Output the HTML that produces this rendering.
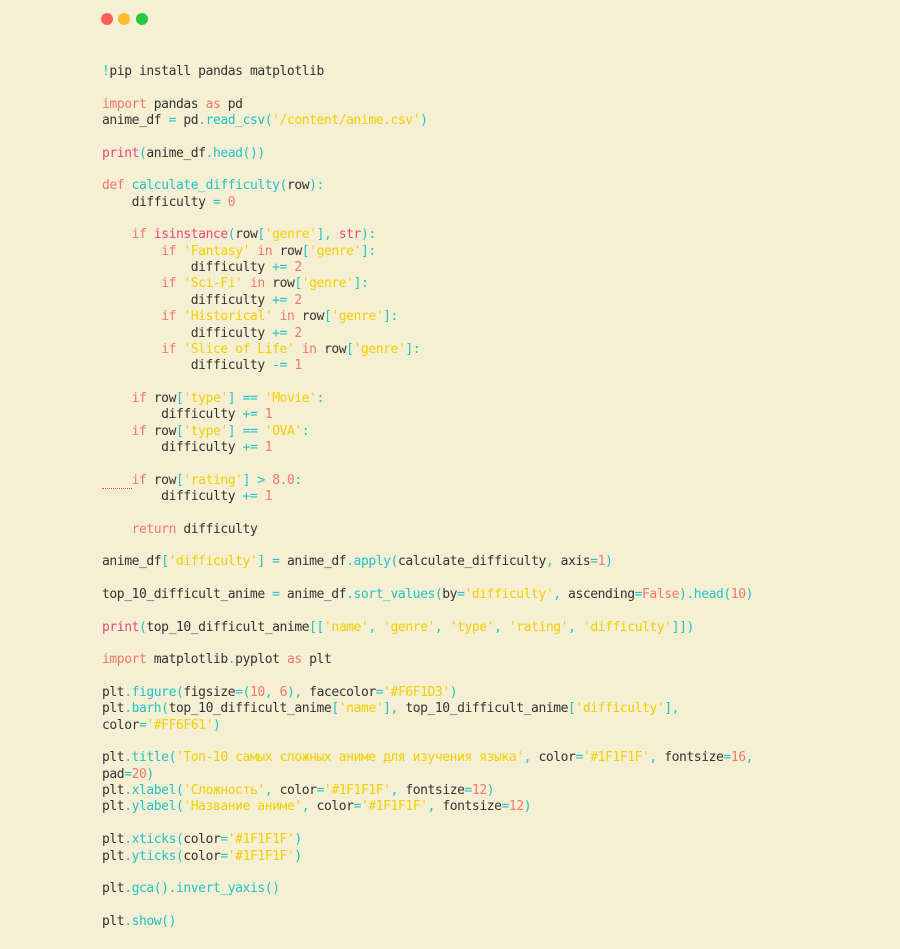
<!DOCTYPE html>
<html><head><meta charset="utf-8"><style>
html,body{margin:0;padding:0;background:#f5efd3;width:900px;height:949px;overflow:hidden}
.dots{position:absolute;top:13px;left:101px}
.dots span{position:absolute;width:12px;height:12px;border-radius:50%;top:0}
pre{position:absolute;left:102px;top:64px;margin:0;font-family:"DejaVu Sans Mono","Liberation Mono",monospace;font-size:13px;letter-spacing:-0.43px;line-height:16.35px;color:#333;white-space:pre}
.k{color:#f4776c}.b{color:#e6487f}.c{color:#22c3c6}.s{color:#f2d000}.n{color:#f4776c}
.u{border-bottom:1px dotted #e84a4a}
</style></head><body>
<div class="dots"><span style="left:0;background:#ff5f57"></span><span style="left:17px;background:#febc2e"></span><span style="left:35px;background:#28c840"></span></div>
<pre><span class="c">!</span>pip install pandas matplotlib

<span class="k">import</span> pandas <span class="k">as</span> pd
anime_df <span class="c">=</span> pd<span class="c">.read_csv(</span><span class="s">'/content/anime.csv'</span><span class="c">)</span>

<span class="b">print</span><span class="c">(</span>anime_df<span class="c">.head())</span>

<span class="k">def</span> <span class="c">calculate_difficulty(</span>row<span class="c">):</span>
    difficulty <span class="c">=</span> <span class="n">0</span>

    <span class="k">if</span> <span class="b">isinstance</span><span class="c">(</span>row<span class="c">[</span><span class="s">'genre'</span><span class="c">],</span> <span class="b">str</span><span class="c">):</span>
        <span class="k">if</span> <span class="s">'Fantasy'</span> <span class="k">in</span> row<span class="c">[</span><span class="s">'genre'</span><span class="c">]:</span>
            difficulty <span class="c">+=</span> <span class="n">2</span>
        <span class="k">if</span> <span class="s">'Sci-Fi'</span> <span class="k">in</span> row<span class="c">[</span><span class="s">'genre'</span><span class="c">]:</span>
            difficulty <span class="c">+=</span> <span class="n">2</span>
        <span class="k">if</span> <span class="s">'Historical'</span> <span class="k">in</span> row<span class="c">[</span><span class="s">'genre'</span><span class="c">]:</span>
            difficulty <span class="c">+=</span> <span class="n">2</span>
        <span class="k">if</span> <span class="s">'Slice of Life'</span> <span class="k">in</span> row<span class="c">[</span><span class="s">'genre'</span><span class="c">]:</span>
            difficulty <span class="c">-=</span> <span class="n">1</span>

    <span class="k">if</span> row<span class="c">[</span><span class="s">'type'</span><span class="c">]</span> <span class="c">==</span> <span class="s">'Movie'</span><span class="c">:</span>
        difficulty <span class="c">+=</span> <span class="n">1</span>
    <span class="k">if</span> row<span class="c">[</span><span class="s">'type'</span><span class="c">]</span> <span class="c">==</span> <span class="s">'OVA'</span><span class="c">:</span>
        difficulty <span class="c">+=</span> <span class="n">1</span>

<span class="u">    </span><span class="k">if</span> row<span class="c">[</span><span class="s">'rating'</span><span class="c">]</span> <span class="c">&gt;</span> <span class="n">8.0</span><span class="c">:</span>
        difficulty <span class="c">+=</span> <span class="n">1</span>

    <span class="k">return</span> difficulty

anime_df<span class="c">[</span><span class="s">'difficulty'</span><span class="c">]</span> <span class="c">=</span> anime_df<span class="c">.apply(</span>calculate_difficulty<span class="c">,</span> axis<span class="c">=</span><span class="n">1</span><span class="c">)</span>

top_10_difficult_anime <span class="c">=</span> anime_df<span class="c">.sort_values(</span>by<span class="c">=</span><span class="s">'difficulty'</span><span class="c">,</span> ascending<span class="c">=</span><span class="n">False</span><span class="c">).head(</span><span class="n">10</span><span class="c">)</span>

<span class="b">print</span><span class="c">(</span>top_10_difficult_anime<span class="c">[[</span><span class="s">'name'</span><span class="c">,</span> <span class="s">'genre'</span><span class="c">,</span> <span class="s">'type'</span><span class="c">,</span> <span class="s">'rating'</span><span class="c">,</span> <span class="s">'difficulty'</span><span class="c">]])</span>

<span class="k">import</span> matplotlib<span class="c">.</span>pyplot <span class="k">as</span> plt

plt<span class="c">.figure(</span>figsize<span class="c">=(</span><span class="n">10</span><span class="c">,</span> <span class="n">6</span><span class="c">),</span> facecolor<span class="c">=</span><span class="s">'#F6F1D3'</span><span class="c">)</span>
plt<span class="c">.barh(</span>top_10_difficult_anime<span class="c">[</span><span class="s">'name'</span><span class="c">],</span> top_10_difficult_anime<span class="c">[</span><span class="s">'difficulty'</span><span class="c">],</span>
color<span class="c">=</span><span class="s">'#FF6F61'</span><span class="c">)</span>

plt<span class="c">.title(</span><span class="s">'Топ-10 самых сложных аниме для изучения языка'</span><span class="c">,</span> color<span class="c">=</span><span class="s">'#1F1F1F'</span><span class="c">,</span> fontsize<span class="c">=</span><span class="n">16</span><span class="c">,</span>
pad<span class="c">=</span><span class="n">20</span><span class="c">)</span>
plt<span class="c">.xlabel(</span><span class="s">'Сложность'</span><span class="c">,</span> color<span class="c">=</span><span class="s">'#1F1F1F'</span><span class="c">,</span> fontsize<span class="c">=</span><span class="n">12</span><span class="c">)</span>
plt<span class="c">.ylabel(</span><span class="s">'Название аниме'</span><span class="c">,</span> color<span class="c">=</span><span class="s">'#1F1F1F'</span><span class="c">,</span> fontsize<span class="c">=</span><span class="n">12</span><span class="c">)</span>

plt<span class="c">.xticks(</span>color<span class="c">=</span><span class="s">'#1F1F1F'</span><span class="c">)</span>
plt<span class="c">.yticks(</span>color<span class="c">=</span><span class="s">'#1F1F1F'</span><span class="c">)</span>

plt<span class="c">.gca().invert_yaxis()</span>

plt<span class="c">.show()</span></pre>
</body></html>
